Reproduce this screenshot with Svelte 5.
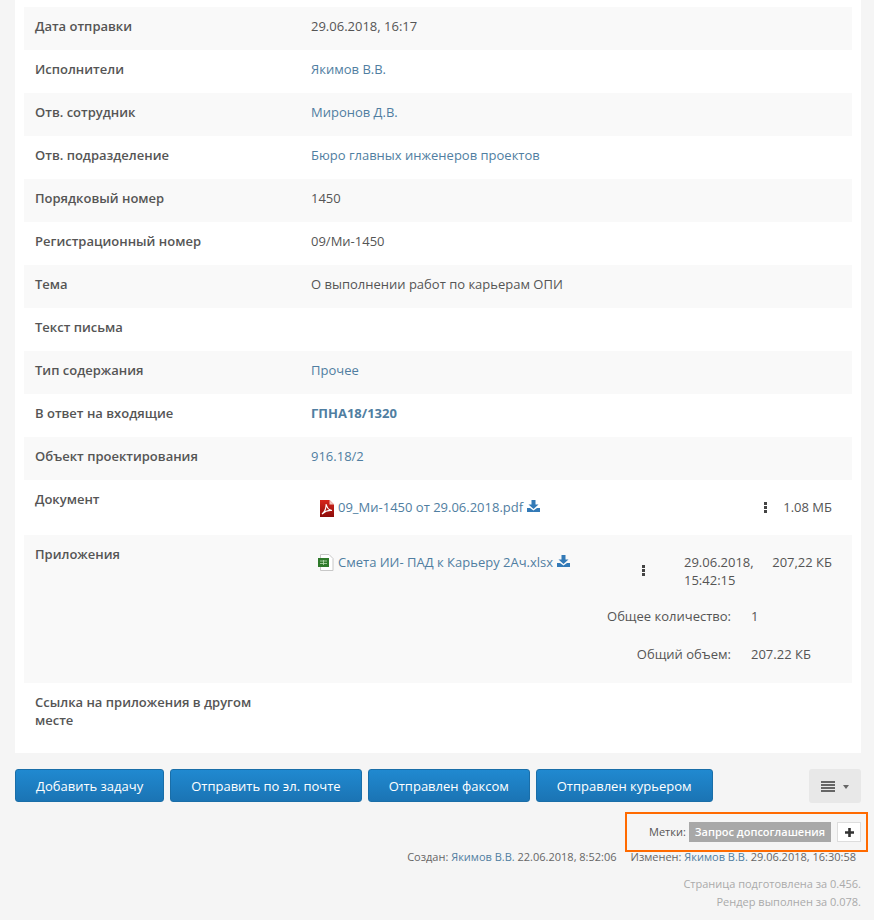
<script>
  const rows = [
    { label: 'Дата отправки', value: '29.06.2018, 16:17' },
    { label: 'Исполнители', value: 'Якимов В.В.', link: true },
    { label: 'Отв. сотрудник', value: 'Миронов Д.В.', link: true },
    { label: 'Отв. подразделение', value: 'Бюро главных инженеров проектов', link: true },
    { label: 'Порядковый номер', value: '1450' },
    { label: 'Регистрационный номер', value: '09/Ми-1450' },
    { label: 'Тема', value: 'О выполнении работ по карьерам ОПИ' },
    { label: 'Текст письма', value: '' },
    { label: 'Тип содержания', value: 'Прочее', link: true },
    { label: 'В ответ на входящие', value: 'ГПНА18/1320', link: true, bold: true },
    { label: 'Объект проектирования', value: '916.18/2', link: true }
  ];
  const buttons = ['Добавить задачу', 'Отправить по эл. почте', 'Отправлен факсом', 'Отправлен курьером'];
</script>

{#snippet download()}
  <svg class="dl" viewBox="0 0 13 12" width="13" height="12">
    <path d="M4.500 0h4v4.500h3L6.500 9 1.500 4.500h3z" fill="#337ab7" />
    <path d="M0 8h3l3.500 2.500L10 8h3v4H0z" fill="#337ab7" />
  </svg>
{/snippet}

{#snippet dots()}
  <span class="dots"><i></i><i></i><i></i></span>
{/snippet}

<div class="page">
  <div class="panel">
    {#each rows as row, i}
      <div class="row" class:odd={i % 2 === 0}>
        <div class="label">{row.label}</div>
        <div class="value" class:link={row.link} class:bold={row.bold}>{row.value}</div>
      </div>
    {/each}

    <div class="row doc">
      <div class="label">Документ</div>
      <div class="file">
        <svg class="ficon" viewBox="0 0 14 17" width="14" height="17">
          <defs>
            <linearGradient id="pdfred" x1="0" y1="0" x2="0" y2="1">
              <stop offset="0" stop-color="#d8261c" />
              <stop offset="1" stop-color="#8c0c0a" />
            </linearGradient>
          </defs>
          <path d="M0 0h9.500L14 4.500V17H0z" fill="url(#pdfred)" />
          <path d="M9.500 0L14 4.500H9.500z" fill="#efc4be" />
          <path d="M2 14c2.500-1.500 4-5 4.200-10 .6 3.500 2.300 6 5.800 6.500-3.500-.4-7 .8-10 3.500z" fill="none" stroke="#fff" stroke-width="1.100" />
        </svg>
        <span class="link">09_Ми-1450 от 29.06.2018.pdf</span>
        {@render download()}
      </div>
      {@render dots()}
      <div class="size">1.08 МБ</div>
    </div>

    <div class="row odd apps">
      <div class="label">Приложения</div>
      <div class="apps-body">
        <div class="app-line">
          <div class="file">
            <svg class="ficon xls" viewBox="0 0 16 17" width="16" height="17">
              <path d="M2.500 .5h8.500l4 4v12H2.500z" fill="#fff" stroke="#c8c8c8" />
              <rect x="0" y="4" width="11" height="9" fill="#2f7a2b" />
              <path d="M2 7h7M2 9.500h7M5.500 6v5" stroke="#b9dcb3" stroke-width=".8" />
            </svg>
            <span class="link">Смета ИИ- ПАД к Карьеру 2Ач.xlsx</span>
            {@render download()}
          </div>
          {@render dots()}
          <div class="date">29.06.2018, 15:42:15</div>
          <div class="size">207,22 КБ</div>
        </div>
        <div class="total"><span>Общее количество:</span><b>1</b></div>
        <div class="total"><span>Общий объем:</span><b>207.22 КБ</b></div>
      </div>
    </div>

    <div class="row last">
      <div class="label">Ссылка на приложения в другом месте</div>
    </div>
  </div>

  <div class="actions">
    {#each buttons as b}
      <button class="btn">{b}</button>
    {/each}
    <button class="menu" aria-label="Меню">
      <span class="bars"><i></i><i></i><i></i><i></i></span>
      <span class="caret"></span>
    </button>
  </div>

  <div class="tags-wrap">
    <div class="tags">
      <span class="tags-label">Метки:</span>
      <span class="tag">Запрос допсоглашения</span>
      <span class="plus">
        <svg viewBox="0 0 9 9" width="9" height="9"><path d="M3.200 0h2.600v3.200H9v2.600H5.800V9H3.200V5.800H0V3.200h3.200z" fill="#333" /></svg>
      </span>
    </div>
  </div>

  <div class="meta">
    <span>Создан: <span class="meta-link">Якимов В.В.</span> 22.06.2018, 8:52:06</span>
    <span>Изменен: <span class="meta-link">Якимов В.В.</span> 29.06.2018, 16:30:58</span>
  </div>

  <div class="timing">
    <div>Страница подготовлена за 0.456.</div>
    <div>Рендер выполнен за 0.078.</div>
  </div>
</div>

<style>
  :global(body) {
    margin: 0;
    background: #f5f5f5;
  }

  .page {
    width: 874px;
    height: 920px;
    overflow: hidden;
    font-family: "Open Sans", sans-serif;
    font-size: 13px;
    line-height: 18px;
    color: #555;
  }

  .panel {
    margin: 0 13px 0 15px;
    padding: 7px 9px 8px;
    background: #fff;
  }

  .row {
    display: flex;
    height: 43px;
    box-sizing: border-box;
    padding: 10px 11px;
  }

  .odd {
    background: #f9f9f9;
  }

  .label {
    width: 276px;
    flex: none;
    font-weight: 600;
    color: #555;
  }

  .link {
    color: #507ea1;
  }

  .bold {
    font-weight: 700;
  }

  .file {
    display: flex;
    align-items: flex-start;
  }

  .file .link {
    margin-right: 4px;
  }

  .ficon {
    flex: none;
    margin: 2px 4px 0 0;
  }

  .xls {
    margin: 1px 4px 0 0;
  }

  .dl {
    flex: none;
    margin-top: 2px;
  }

  .dots {
    display: flex;
    flex-direction: column;
    gap: 1px;
    flex: none;
  }

  .dots i {
    width: 3px;
    height: 3px;
    background: #444;
  }

  .doc {
    height: 55px;
  }

  .doc .file {
    margin: 8px 0 0 9px;
    width: 444px;
  }

  .doc .dots {
    margin-top: 12px;
  }

  .doc .size {
    margin: 8px 0 0 11px;
    width: 54px;
    text-align: right;
  }

  .apps {
    height: 148px;
  }

  .apps-body {
    flex: 1;
    margin-top: 8px;
  }

  .app-line {
    display: flex;
    height: 53px;
    margin-left: 7px;
  }

  .app-line .file {
    width: 324px;
  }

  .app-line .dots {
    margin-top: 12px;
  }

  .date {
    width: 75px;
    margin-left: 39px;
  }

  .app-line .size {
    margin-left: 11px;
    width: 62px;
    text-align: right;
    white-space: nowrap;
  }

  .total {
    display: flex;
    height: 38px;
    padding-top: 1px;
    box-sizing: border-box;
  }

  .total span {
    width: 420px;
    text-align: right;
  }

  .total b {
    margin-left: 20px;
    font-weight: 400;
  }

  .last {
    height: 62px;
    padding-top: 10px;
  }

  .last .label {
    width: 230px;
  }

  .actions {
    display: flex;
    gap: 6px;
    margin: 16px 13px 0 15px;
  }

  .btn {
    height: 33px;
    padding: 0 20px;
    border: 1px solid #1a6ea8;
    border-radius: 3px;
    background: linear-gradient(#2089d0, #1b74b4);
    color: #fff;
    font: 400 13px "Open Sans", sans-serif;
  }

  .menu {
    display: flex;
    align-items: center;
    justify-content: center;
    gap: 8px;
    width: 52px;
    height: 34px;
    margin-left: auto;
    padding: 0;
    border: 0;
    border-radius: 3px;
    background: #e8e8e8;
  }

  .bars {
    display: flex;
    flex-direction: column;
    gap: 1px;
  }

  .bars i {
    width: 14px;
    height: 2px;
    background: #666;
  }

  .caret {
    margin-top: 2px;
    border: 3px solid transparent;
    border-top: 4px solid #666;
    border-bottom: 0;
  }

  .tags-wrap {
    display: flex;
    justify-content: flex-end;
    margin: 9px 6px 0 0;
  }

  .tags {
    display: flex;
    align-items: center;
    gap: 3px;
    box-sizing: border-box;
    width: 243px;
    height: 40px;
    padding: 0 5px 0 22px;
    border: 2px solid #ff6a00;
    font-size: 11px;
  }

  .tag {
    padding: 0 6px;
    height: 20px;
    line-height: 20px;
    background: #a8a8a8;
    color: #fff;
    font-weight: 600;
    white-space: nowrap;
  }

  .plus {
    display: flex;
    align-items: center;
    justify-content: center;
    box-sizing: border-box;
    width: 24px;
    height: 20px;
    margin-left: 3px;
    border: 1px solid #ddd;
    background: #fff;
  }

  .meta {
    display: flex;
    justify-content: flex-end;
    gap: 14px;
    margin: -4px 18px 0 0;
    font-size: 11px;
    color: #666;
  }

  .meta-link {
    color: #507ea1;
  }

  .timing {
    margin: 9px 13px 0 0;
    text-align: right;
    font-size: 11px;
    color: #aaa;
  }
</style>
